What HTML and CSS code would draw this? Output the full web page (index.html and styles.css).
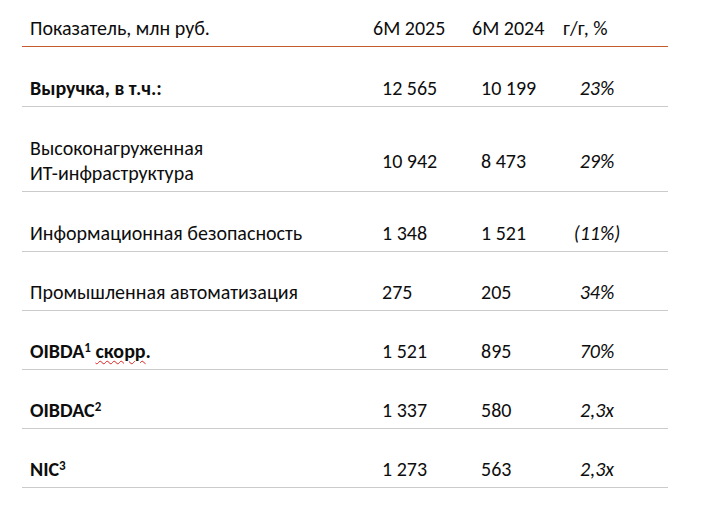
FILE: index.html
```html
<!DOCTYPE html>
<html lang="ru">
<head>
<meta charset="utf-8">
<title>Показатели</title>
<link rel="stylesheet" href="styles.css">
</head>
<body>
<div class="table">
  <div class="row head">
    <div class="cell name">Показатель, млн руб.</div>
    <div class="cell">6M 2025</div>
    <div class="cell">6M 2024</div>
    <div class="cell">г/г, %</div>
  </div>
  <div class="row r1">
    <div class="cell name bold">Выручка, в т.ч.:</div>
    <div class="cell val">12 565</div>
    <div class="cell val">10 199</div>
    <div class="cell pct"><span>23%</span></div>
  </div>
  <div class="row r2">
    <div class="cell name">Высоконагруженная<br>ИТ-инфраструктура</div>
    <div class="cell val">10 942</div>
    <div class="cell val">8 473</div>
    <div class="cell pct"><span>29%</span></div>
  </div>
  <div class="row r1">
    <div class="cell name">Информационная безопасность</div>
    <div class="cell val">1 348</div>
    <div class="cell val">1 521</div>
    <div class="cell pct"><span>(11%)</span></div>
  </div>
  <div class="row">
    <div class="cell name">Промышленная автоматизация</div>
    <div class="cell val">275</div>
    <div class="cell val">205</div>
    <div class="cell pct"><span>34%</span></div>
  </div>
  <div class="row">
    <div class="cell name bold">OIBDA<sup>1</sup> <span class="spell">скорр</span>.</div>
    <div class="cell val">1 521</div>
    <div class="cell val">895</div>
    <div class="cell pct"><span>70%</span></div>
  </div>
  <div class="row">
    <div class="cell name bold">OIBDAC<sup>2</sup></div>
    <div class="cell val">1 337</div>
    <div class="cell val">580</div>
    <div class="cell pct"><span>2,3x</span></div>
  </div>
  <div class="row">
    <div class="cell name bold">NIC<sup>3</sup></div>
    <div class="cell val">1 273</div>
    <div class="cell val">563</div>
    <div class="cell pct"><span>2,3x</span></div>
  </div>
</div>
</body>
</html>
```
FILE: styles.css
```css
html, body {
  margin: 0;
  padding: 0;
  background: #ffffff;
}
body {
  font-family: Carlito, Calibri, "Liberation Sans Narrow", "Liberation Sans", sans-serif;
  font-size: 20px;
  color: #0d0d0d;
}
.table {
  width: 646px;
  margin-left: 22px;
}
.row {
  display: grid;
  grid-template-columns: 343px 99px 91px 113px;
  border-bottom: 1px solid #cbcbcb;
}
.row.head {
  border-bottom: 1px solid #c65b2f;
}
.cell {
  display: flex;
  align-items: center;
  line-height: 25px;
  padding: 28px 0 5px 8px;
  white-space: nowrap;
}
.cell.name {
  display: block;
}
.head .cell {
  padding-top: 16px;
}
.r1 .cell, .r2 .cell {
  padding-top: 29px;
}
.cell.val {
  padding-left: 17px;
}
.cell.pct {
  padding-left: 15px;
  font-style: italic;
}
.cell.pct span {
  display: inline-block;
  width: 54px;
  text-align: center;
}
.bold {
  font-weight: bold;
}
sup {
  font-size: 0.65em;
  line-height: 0;
  vertical-align: 0.5em;
}
.spell {
  text-decoration: underline wavy #e02020;
  text-decoration-thickness: 1px;
  text-underline-offset: 2px;
}
```
